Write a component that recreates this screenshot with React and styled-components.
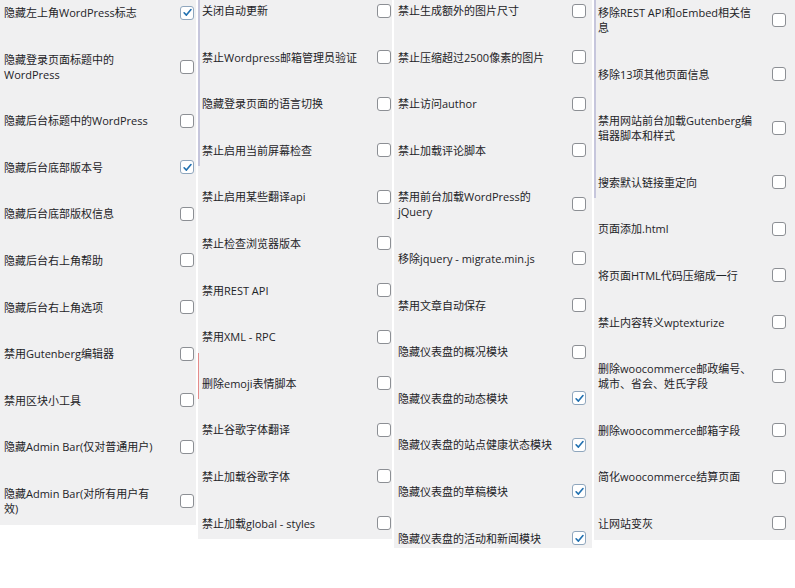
import React from "react";
import styled, { createGlobalStyle } from "styled-components";

const GlobalStyle = createGlobalStyle`
  body {
    margin: 0;
    background: #ffffff;
    font-family: "Open Sans", "Noto Sans CJK SC", sans-serif;
    overflow: hidden;
  }
`;

const columns = [
  {
    width: "196px",
    right: 2,
    shift: 2,
    items: [
      ["隐藏左上角WordPress标志", true],
      ["隐藏登录页面标题中的WordPress"],
      ["隐藏后台标题中的WordPress"],
      ["隐藏后台底部版本号", true],
      ["隐藏后台底部版权信息"],
      ["隐藏后台右上角帮助"],
      ["隐藏后台右上角选项"],
      ["禁用Gutenberg编辑器"],
      ["禁用区块小工具"],
      ["隐藏Admin Bar(仅对普通用户)"],
      ["隐藏Admin Bar(对所有用户有效)"],
    ],
  },
  {
    width: "194px",
    right: 1,
    edge: 4,
    items: [
      ["关闭自动更新"],
      ["禁止Wordpress邮箱管理员验证"],
      ["隐藏登录页面的语言切换"],
      ["禁止启用当前屏幕检查"],
      ["禁止启用某些翻译api"],
      ["禁止检查浏览器版本"],
      ["禁用REST API"],
      ["禁用XML - RPC"],
      ["删除emoji表情脚本", false, true],
      ["禁止谷歌字体翻译"],
      ["禁止加载谷歌字体"],
      ["禁止加载global - styles"],
    ],
  },
  {
    width: "198px",
    right: 6,
    tail: 2,
    items: [
      ["禁止生成额外的图片尺寸"],
      ["禁止压缩超过2500像素的图片"],
      ["禁止访问author"],
      ["禁止加载评论脚本"],
      ["禁用前台加载WordPress的jQuery"],
      ["移除jquery - migrate.min.js"],
      ["禁用文章自动保存"],
      ["隐藏仪表盘的概况模块"],
      ["隐藏仪表盘的动态模块", true],
      ["隐藏仪表盘的站点健康状态模块", true],
      ["隐藏仪表盘的草稿模块", true],
      ["隐藏仪表盘的活动和新闻模块", true],
    ],
  },
  {
    width: "1fr",
    right: 9,
    edge: 4,
    shift: 2,
    items: [
      ["移除REST API和oEmbed相关信息"],
      ["移除13项其他页面信息"],
      ["禁用网站前台加载Gutenberg编辑器脚本和样式"],
      ["搜索默认链接重定向"],
      ["页面添加.html"],
      ["将页面HTML代码压缩成一行"],
      ["禁止内容转义wptexturize"],
      ["删除woocommerce邮政编号、城市、省会、姓氏字段"],
      ["删除woocommerce邮箱字段"],
      ["简化woocommerce结算页面"],
      ["让网站变灰"],
    ],
  },
];

const Board = styled.div`
  display: grid;
  grid-template-columns: ${(p) => p.$cols};
  column-gap: 2px;
  align-items: start;
  margin-top: -20px;
`;

const Column = styled.div`
  background: #f0f0f1;
  display: flex;
  flex-direction: column;
  padding-top: ${(p) => p.$shift || 0}px;
`;

const Row = styled.div`
  display: flex;
  align-items: center;
  justify-content: space-between;
  padding: 23px ${(p) => p.$right}px ${(p) => p.$bottom ?? 8.6}px 4px;
  box-shadow: ${(p) =>
    p.$flag
      ? "inset 1px 0 0 #e58b8b"
      : p.$edge
      ? "inset 2px 0 0 #c6c6dc"
      : "none"};
`;

const Label = styled.span`
  max-width: 157px;
  font-size: 11px;
  line-height: 15px;
  color: #1d2327;
`;

const Box = styled.span`
  flex: none;
  width: 12px;
  height: 12px;
  border: 1px solid ${(p) => (p.$on ? "#8fa6bd" : "#8c8f94")};
  border-radius: 3px;
  background: #ffffff;
  display: flex;
  align-items: center;
  justify-content: center;
`;

function Check({ on }) {
  return (
    <Box $on={on}>
      {on && (
        <svg width="11" height="11" viewBox="0 0 12 12">
          <path
            d="M2.3 6.3 L4.8 8.8 L9.8 2.8"
            fill="none"
            stroke="#2271b1"
            strokeWidth="1.8"
            strokeLinecap="round"
            strokeLinejoin="round"
          />
        </svg>
      )}
    </Box>
  );
}

export default function App() {
  return (
    <>
      <GlobalStyle />
      <Board $cols={columns.map((c) => c.width).join(" ")}>
        {columns.map((col, ci) => (
          <Column key={ci} $shift={col.shift}>
            {col.items.map(([text, on, flag], i) => (
              <Row
                key={text}
                $right={col.right}
                $edge={col.edge && i < col.edge}
                $flag={flag}
                $bottom={
                  col.tail !== undefined && i === col.items.length - 1
                    ? col.tail
                    : undefined
                }
              >
                <Label>{text}</Label>
                <Check on={!!on} />
              </Row>
            ))}
          </Column>
        ))}
      </Board>
    </>
  );
}
